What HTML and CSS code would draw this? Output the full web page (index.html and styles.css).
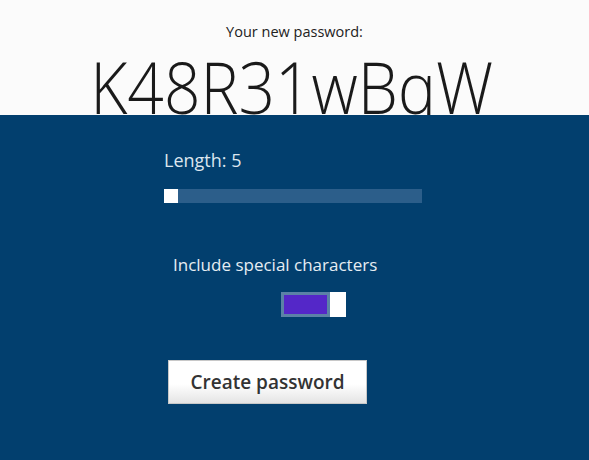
FILE: index.html
```html
<!DOCTYPE html>
<html>
<head>
<meta charset="utf-8">
<link rel="stylesheet" href="styles.css">
</head>
<body>
<div class="top">
  <div class="caption">Your new password:</div>
  <div class="password"><span class="pw-text">K48R31wBqW</span></div>
</div>
<div class="panel">
  <div class="length">Length: 5</div>
  <div class="slider"><div class="thumb"></div></div>
  <div class="special">Include special characters</div>
  <div class="toggle-row">
    <div class="toggle"><div class="fill"></div><div class="knob"></div></div>
  </div>
  <button class="create">Create password</button>
</div>
</body>
</html>
```
FILE: styles.css
```css
html, body {
  margin: 0;
  padding: 0;
}
body {
  width: 589px;
  height: 460px;
  overflow: hidden;
  font-family: "Open Sans", "Noto Sans", sans-serif;
  background: #023f6e;
}
.top {
  height: 115px;
  background: #fbfbfb;
  overflow: hidden;
  text-align: center;
}
.caption {
  padding-top: 22px;
  font-size: 14.5px;
  line-height: 20px;
  color: #222;
}
.password {
  font-size: 72px;
  font-weight: 300;
  line-height: 72px;
  color: #1a1a1a;
  margin-top: 8px;
  padding-right: 6px;
}
.pw-text {
  display: inline-block;
  transform: scaleX(0.889);
  transform-origin: center;
}
.panel {
  height: 345px;
  background: #023f6e;
  padding-left: 164px;
  box-sizing: border-box;
  padding-top: 34px;
}
.length {
  color: #dce6ef;
  font-size: 18px;
  line-height: 22px;
}
.slider {
  margin-top: 18px;
  width: 258px;
  height: 14px;
  background: #2c5e8a;
}
.thumb {
  width: 14px;
  height: 14px;
  background: #ffffff;
}
.special {
  margin-top: 51px;
  margin-left: 9px;
  color: #e6edf3;
  font-size: 17px;
  line-height: 22px;
}
.toggle-row {
  margin-top: 16px;
  padding-left: 117px;
}
.toggle {
  display: flex;
  width: 65px;
  height: 25px;
}
.fill {
  width: 43px;
  height: 19px;
  border: 3px solid #5b82a6;
  background: #5427c8;
}
.knob {
  width: 16px;
  height: 25px;
  background: #ffffff;
}
.create {
  display: block;
  margin-top: 43px;
  margin-left: 4px;
  width: 199px;
  height: 44px;
  border: 1px solid #c8c8c8;
  background: linear-gradient(#ffffff 0%, #ffffff 55%, #e4e4e4 100%);
  font-family: "Open Sans", "Noto Sans", sans-serif;
  font-size: 19px;
  font-weight: 600;
  color: #333;
  padding: 0;
}
```
